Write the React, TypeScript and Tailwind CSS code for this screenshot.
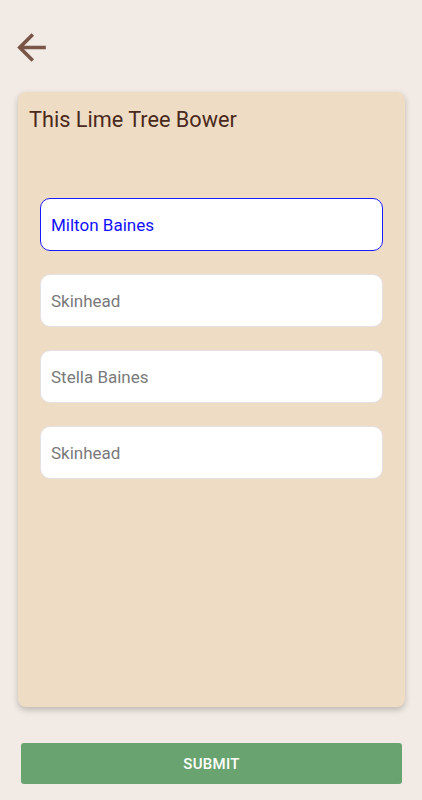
const FIELDS = [
  { value: "Milton Baines", placeholder: "", active: true },
  { value: "", placeholder: "Skinhead", active: false },
  { value: "", placeholder: "Stella Baines", active: false },
  { value: "", placeholder: "Skinhead", active: false },
];

function BackArrow() {
  return (
    <svg width="43" height="43" viewBox="0 0 24 24" fill="#795548" aria-hidden>
      <path d="M20 11H7.83l5.59-5.59L12 4l-8 8 8 8 1.41-1.41L7.83 13H20v-2z" />
    </svg>
  );
}

export default function App() {
  return (
    <div
      className="flex min-h-screen w-full flex-col bg-[#f2ebe5]"
      style={{ fontFamily: "Roboto, 'Noto Sans', sans-serif" }}
    >
      <header className="pl-[10px] pt-[26px]">
        <button aria-label="Back" className="block h-[43px] w-[43px]">
          <BackArrow />
        </button>
      </header>

      <section className="ml-[18px] mr-[17px] mt-[23px] flex h-[615px] flex-col rounded-lg bg-[#eedcc5] px-[11px] pt-[13px] shadow-[0_3px_6px_rgba(0,0,0,0.22)]">
        <h1 className="text-[21.7px] leading-[30px] text-[#4a2a1c]">This Lime Tree Bower</h1>

        <div className="mt-[63px] flex flex-col gap-[23px] px-[11px]">
          {FIELDS.map((f, i) => (
            <input
              key={i}
              defaultValue={f.value}
              placeholder={f.placeholder}
              className={`h-[53px] w-full rounded-[10px] bg-white px-[10px] text-[17px] outline-none ${
                f.active
                  ? "border border-[#1a1aff] text-[#1010ff]"
                  : "border border-[#e4e0e4] text-[#333] placeholder:text-[#7a7a7a]"
              }`}
            />
          ))}
        </div>
      </section>

      <button className="ml-[21px] mr-[20px] mt-[36px] h-[41px] rounded-[3px] bg-[#69a36f] pt-[2px] text-[15px] font-medium tracking-[0.3px] text-white">
        SUBMIT
      </button>
    </div>
  );
}
